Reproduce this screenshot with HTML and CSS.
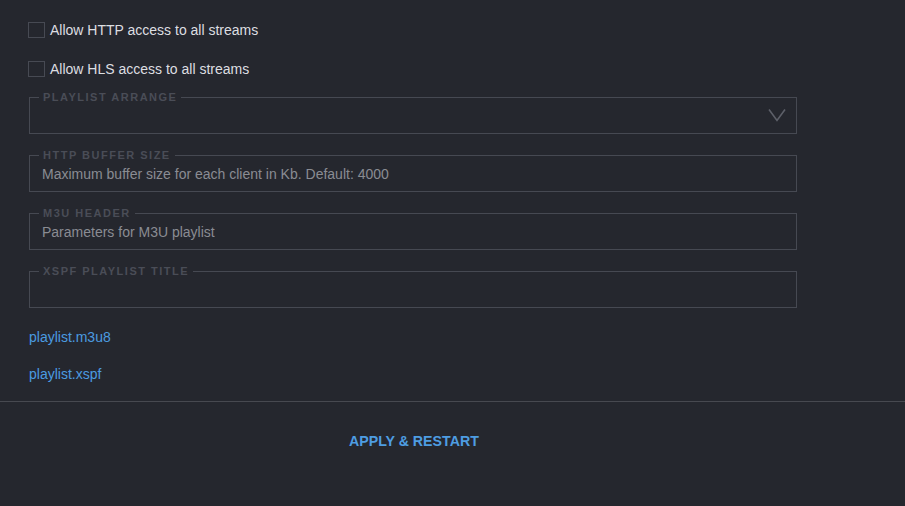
FILE: index.html
```html
<!DOCTYPE html>
<html>
<head>
<meta charset="utf-8">
<link rel="stylesheet" href="styles.css">
</head>
<body>
<div class="page">
  <div class="form">
    <label class="check-row">
      <span class="check-box"></span>
      <span class="check-label">Allow HTTP access to all streams</span>
    </label>
    <label class="check-row check-row-second">
      <span class="check-box"></span>
      <span class="check-label">Allow HLS access to all streams</span>
    </label>

    <fieldset class="field">
      <legend class="field-legend">Playlist arrange</legend>
      <div class="field-content field-select">
        <span class="field-value"></span>
        <svg class="chevron" width="18" height="14" viewBox="0 0 18 14">
          <polyline points="1,1.5 9,12.5 17,1.5" fill="none" stroke="#5d6069" stroke-width="1.6"/>
        </svg>
      </div>
    </fieldset>

    <fieldset class="field">
      <legend class="field-legend">HTTP buffer size</legend>
      <div class="field-content">
        <span class="field-placeholder">Maximum buffer size for each client in Kb. Default: 4000</span>
      </div>
    </fieldset>

    <fieldset class="field">
      <legend class="field-legend">M3U header</legend>
      <div class="field-content">
        <span class="field-placeholder">Parameters for M3U playlist</span>
      </div>
    </fieldset>

    <fieldset class="field">
      <legend class="field-legend">XSPF playlist title</legend>
      <div class="field-content">
        <span class="field-placeholder"></span>
      </div>
    </fieldset>

    <div class="links">
      <a class="link" href="#">playlist.m3u8</a>
      <a class="link" href="#">playlist.xspf</a>
    </div>
  </div>

  <div class="actions">
    <button class="apply-btn" type="button">APPLY &amp; RESTART</button>
  </div>
</div>
</body>
</html>
```

FILE: styles.css
```css
html, body {
  margin: 0;
  padding: 0;
  background: #25272e;
}

body {
  font-family: "Liberation Sans", Arial, sans-serif;
  font-size: 14px;
  color: #dcdde0;
  width: 905px;
  height: 506px;
  overflow: hidden;
}

.page {
  display: flex;
  flex-direction: column;
}

.form {
  display: flex;
  flex-direction: column;
  padding: 20px 0 0 29px;
}

.check-row {
  display: flex;
  align-items: center;
  height: 20px;
  line-height: 20px;
  cursor: pointer;
}

.check-row-second {
  margin-top: 19px;
}

.check-box {
  box-sizing: border-box;
  width: 17px;
  height: 16px;
  border: 1px solid #474a53;
  margin-left: -1px;
  margin-top: -1px;
}

.check-label {
  margin-left: 5px;
  color: #dddee1;
}

.field {
  box-sizing: border-box;
  width: 768px;
  margin: 12px 0 0 0;
  padding: 0 0 0 12px;
  border: 1px solid #464952;
  min-width: 0;
}

.field + .field {
  margin-top: 15px;
}

.field-legend {
  margin-left: -3px;
  padding: 0 4px;
  font-size: 11px;
  line-height: 12px;
  font-weight: bold;
  letter-spacing: 1.5px;
  text-transform: uppercase;
  color: #4a4d57;
}

.field-content {
  box-sizing: border-box;
  height: 30px;
  padding-top: 3px;
  display: flex;
  align-items: flex-start;
  justify-content: space-between;
}

.field-placeholder {
  line-height: 20px;
  color: #8a8c93;
}

.field-select {
  padding-top: 5px;
}

.chevron {
  margin-right: 10px;
}

.links {
  display: flex;
  flex-direction: column;
  align-items: flex-start;
  gap: 17px;
  margin-top: 19px;
}

.link {
  line-height: 20px;
  color: #4b9be0;
  text-decoration: none;
}

.actions {
  margin-top: 17px;
  border-top: 1px solid #474950;
  padding: 29px 0 0 349px;
}

.apply-btn {
  background: none;
  border: none;
  padding: 0;
  font-family: "Liberation Sans", Arial, sans-serif;
  font-size: 14.2px;
  font-weight: bold;
  line-height: 20px;
  color: #4e9de2;
  cursor: pointer;
}
```
